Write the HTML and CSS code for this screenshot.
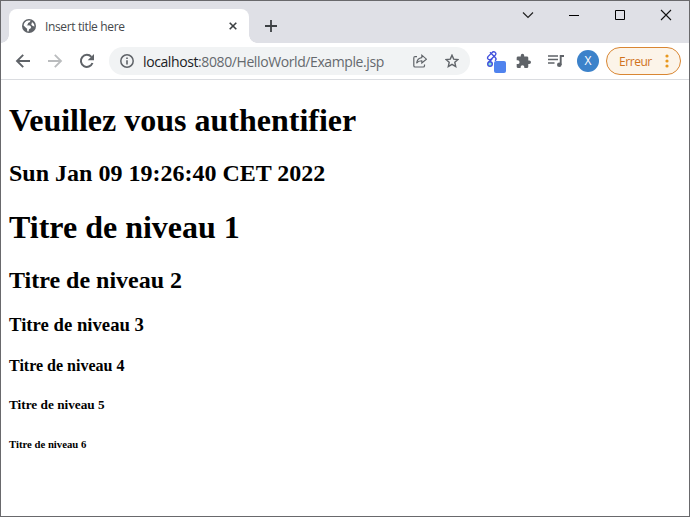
FILE: index.html
```html
<!DOCTYPE html>
<html lang="fr">
<head>
<meta charset="utf-8">
<title>Insert title here</title>
<link rel="stylesheet" href="styles.css">
</head>
<body>
<div class="window">
  <header class="tabstrip">
    <div class="tab">
      <svg class="favicon" viewBox="0 0 14 14"><circle cx="7" cy="7" r="7" fill="#5f6368"/><path d="M6.2 1.6 8.6 1.5 7.9 3.1 6.1 4 5.7 5.5 4.5 6.3 8 6.6 9.2 8 8.5 9.6 7 10.2 6.6 12.6 5.2 12.3 5.1 9.8 3.6 8.6 1.6 6.5C1.7 4 3.6 2 6.2 1.6ZM10 3l2 2.1.5 2.3-1.7-.5-1.5-1.2Z" fill="#fff"/></svg>
      <span class="tab-title">Insert title here</span>
      <svg class="close" viewBox="0 0 8 8"><path d="m.7.7 6.6 6.6m0-6.6L.7 7.3" stroke="#3c4043" stroke-width="1.6"/></svg>
    </div>
    <svg class="plus" viewBox="0 0 12 12"><path d="M6 0v12M0 6h12" stroke="#3c4043" stroke-width="1.8"/></svg>
    <div class="controls">
      <svg viewBox="0 0 12 12"><path d="m1 3.5 5 5 5-5" stroke="#222" stroke-width="1.2" fill="none"/></svg>
      <svg viewBox="0 0 12 12"><path d="M1 6.5h10" stroke="#000"/></svg>
      <svg viewBox="0 0 12 12"><path d="M1.5 1.5h9v9h-9z" stroke="#000" fill="none"/></svg>
      <svg viewBox="0 0 12 12"><path d="m1 1 10 10m0-10L1 11" stroke="#111" stroke-width="1.1"/></svg>
    </div>
  </header>
  <nav class="toolbar">
    <svg class="nav" viewBox="0 0 16 16"><path d="M15 8H2m6.2-6.2L2 8l6.2 6.2" fill="none" stroke="#5f6368" stroke-width="1.9"/></svg>
    <svg class="nav" viewBox="0 0 16 16"><path d="M1 8h13M7.8 1.8 14 8l-6.2 6.2" fill="none" stroke="#babcbe" stroke-width="1.8"/></svg>
    <svg class="nav" viewBox="0 0 16 16"><path d="M13.5 10A6 6 0 1 1 12.4 3.9" fill="none" stroke="#5f6368" stroke-width="2"/><path d="M15 1v6.3H8.7Z" fill="#5f6368"/></svg>
    <div class="omnibox">
      <svg class="info" viewBox="0 0 14 14"><circle cx="7" cy="7" r="6.2" fill="none" stroke="#5f6368" stroke-width="1.5"/><path d="M7 6.2v4.3M7 3.4v1.6" stroke="#5f6368" stroke-width="1.6"/></svg>
      <span class="url"><b>localhost</b>:8080/HelloWorld/Example.jsp</span>
      <svg class="share" viewBox="0 0 14 14"><path d="M4 2.600H2.100Q.8 2.600.8 3.900v7.800Q.8 13 2.100 13h8.100q1.300 0 1.300-1.300V10.500" fill="none" stroke="#5f6368" stroke-width="1.200"/><path d="M8.800 1.200 13.400 5.200 8.800 9V6.800Q5.300 6.700 3.600 9.300 4.200 4.200 8.800 3.600Z" fill="none" stroke="#5f6368" stroke-width="1.100"/></svg>
      <svg class="star" viewBox="0 0 14 14"><path d="m7 1.2 1.7 3.9 4.3.4-3.2 2.800.9 4.200L7 10.300l-3.700 2.200.9-4.200L1 5.500l4.300-.4Z" fill="none" stroke="#5f6368" stroke-width="1.4"/></svg>
    </div>
    <svg class="ext" viewBox="0 0 20 22"><g fill="none" stroke="#4050dc" stroke-width="1.4"><path d="M4 1.3 9.3 6.6Q11 8 9 9.8M9 1.2q-1.8-1-3.2.7L2 5.6Q.7 7.7 3 8.6q1.6.5 2.7-.8l3-3Q11 2.6 9 1.2ZM6.2 8 2.4 11.4"/><circle cx="4" cy="13" r="2.3" fill="#8ee7d0"/></g><rect x="8" y="10" width="12" height="12" rx="2" fill="#5083ee"/></svg>
    <svg class="puzzle" viewBox="1 0 22 22"><path fill="#5f6368" d="M20.5 11H19V7a2 2 0 0 0-2-2h-4V3.500a2.500 2.500 0 0 0-5 0V5H4a2 2 0 0 0-2 2v3.800h1.500a2.700 2.700 0 0 1 0 5.400H2V20a2 2 0 0 0 2 2h3.800v-1.500a2.700 2.700 0 0 1 5.400 0V22H17a2 2 0 0 0 2-2v-4h1.500a2.500 2.500 0 0 0 0-5Z"/></svg>
    <svg class="media" viewBox="0 0 16 14"><path d="M0 2h10M0 5.500h10M0 9h6.500" stroke="#5f6368" stroke-width="1.6"/><path d="M12.700 11V2H16" fill="none" stroke="#5f6368" stroke-width="1.9"/><circle cx="11.300" cy="10.700" r="2.300" fill="#5f6368"/></svg>
    <div class="avatar">X</div>
    <div class="error"><span>Erreur</span><svg viewBox="0 0 4 14"><g fill="#e8981e"><circle cx="2" cy="2" r="1.600"/><circle cx="2" cy="7" r="1.600"/><circle cx="2" cy="12" r="1.600"/></g></svg></div>
  </nav>
  <main class="page">
    <h1>Veuillez vous authentifier</h1>
    <h2>Sun Jan 09 19:26:40 CET 2022</h2>
    <h1>Titre de niveau 1</h1>
    <h2>Titre de niveau 2</h2>
    <h3>Titre de niveau 3</h3>
    <h4>Titre de niveau 4</h4>
    <h5>Titre de niveau 5</h5>
    <h6>Titre de niveau 6</h6>
  </main>
</div>
</body>
</html>
```
FILE: styles.css
```css
* { box-sizing: border-box; }
body { margin: 0; background: #fff; overflow: hidden; }
svg { display: block; flex: none; }
.window {
  width: 690px; height: 517px; border: 1px solid #69696c;
  display: flex; flex-direction: column; background: #fff;
  font-family: "Open Sans", "Noto Sans", sans-serif;
}
.tabstrip { height: 42px; flex: none; display: flex; background: #dfe0e6; padding-left: 8px; }
.tab {
  position: relative; width: 240px; height: 34px; margin-top: 8px; padding: 0 12px 0 13px;
  display: flex; align-items: center; background: #fff; border-radius: 8px 8px 0 0;
}
.tab::before, .tab::after {
  content: ""; position: absolute; bottom: 0; width: 8px; height: 8px;
}
.tab::before { left: -8px; background: radial-gradient(circle at 0 0, transparent 7.5px, #fff 8px); }
.tab::after { right: -8px; background: radial-gradient(circle at 100% 0, transparent 7.5px, #fff 8px); }
.favicon { width: 14px; height: 14px; }
.tab-title { margin-left: 9px; flex: 1; font-size: 12px; letter-spacing: -.36px; color: #45484c; white-space: nowrap; }
.close { width: 8px; height: 8px; }
.plus { width: 12px; height: 12px; margin: 19px 0 0 16px; }
.controls { display: flex; gap: 34px; margin: 8px 17px 0 auto; }
.controls svg { width: 12px; height: 12px; }
.toolbar {
  height: 37px; flex: none; display: flex; align-items: center;
  padding: 0 8px 0 14px; border-bottom: 1px solid #dadce0;
}
.nav { width: 16px; height: 16px; margin-right: 16px; }
.omnibox {
  width: 361px; height: 28px; margin-left: -2px; padding: 0 11px;
  display: flex; align-items: center; border-radius: 14px; background: #f1f3f4;
}
.info { width: 14px; height: 14px; }
.url { flex: 1; margin-left: 9px; font-size: 14px; letter-spacing: -.4px; color: #65696e; white-space: nowrap; }
.url b { font-weight: 400; color: #202124; }
.share { width: 14px; height: 14px; margin-right: 18px; }
.star { width: 14px; height: 14px; }
.ext { width: 20px; height: 22px; margin: 2px 0 0 16px; }
.puzzle { width: 15px; height: 15px; margin: -1px 0 0 10px; }
.media { width: 16px; height: 14px; margin: 0 0 0 17px; }
.avatar {
  width: 22px; height: 22px; margin-left: 13px; border-radius: 50%;
  background: #3c82ca; color: #fff; font-size: 12px; line-height: 22px; text-align: center;
}
.error {
  width: 75px; height: 28px; margin-left: 7px; padding: 0 11px 0 12px;
  display: flex; align-items: center; justify-content: space-between;
  border: 1px solid #d98632; border-radius: 14px; background: #fcf4e9;
  color: #d0721c; font-size: 12px; letter-spacing: -.45px;
}
.error svg { width: 4px; height: 14px; }
.page { padding: 0 8px; font-family: "Liberation Serif", serif; color: #000; }
.page > * { font-weight: bold; line-height: normal; }
.page h1 { font-size: 32px; margin: 21.44px 0 20.44px; padding-top: 1px; }
.page h2 { font-size: 24px; margin: 19.92px 0; }
.page h3 { font-size: 18.72px; margin: 18.72px 0; }
.page h4 { font-size: 16px; margin: 21.28px 0; }
.page h5 { font-size: 13.28px; margin: 22.18px 0; }
.page h6 { font-size: 10.72px; margin: 24.98px 0; }
```
